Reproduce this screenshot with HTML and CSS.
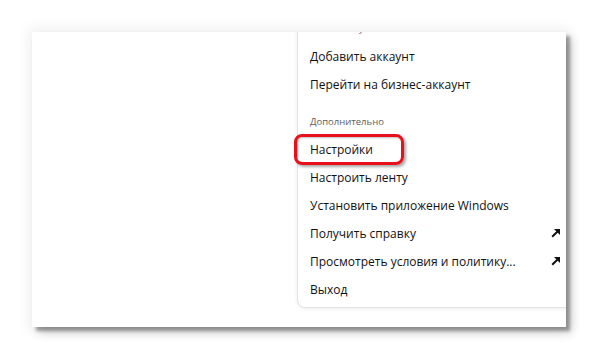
FILE: index.html
```html
<!DOCTYPE html>
<html lang="ru">
<head>
<meta charset="utf-8">
<link rel="stylesheet" href="styles.css">
</head>
<body>
<div class="page">
  <div class="frame">
    <div class="spacer"></div>
    <div class="panel">
      <div class="label first">Ваши аккаунты</div>
      <div class="item">Добавить аккаунт</div>
      <div class="item">Перейти на бизнес-аккаунт</div>
      <div class="label">Дополнительно</div>
      <div class="item marked">Настройки<span class="mark"></span></div>
      <div class="item">Настроить ленту</div>
      <div class="item">Установить приложение Windows</div>
      <div class="item"><span>Получить справку</span>
        <svg class="ext" width="10" height="10" viewBox="0 0 10 10"><path d="M1.2 8.8 L6.8 3.2" stroke="#111" stroke-width="2" fill="none"/><path d="M3 1 H9 V7 Z" fill="#111"/></svg>
      </div>
      <div class="item"><span>Просмотреть условия и политику...</span>
        <svg class="ext" width="10" height="10" viewBox="0 0 10 10"><path d="M1.2 8.8 L6.8 3.2" stroke="#111" stroke-width="2" fill="none"/><path d="M3 1 H9 V7 Z" fill="#111"/></svg>
      </div>
      <div class="item">Выход</div>
    </div>
  </div>
</div>
</body>
</html>
```

FILE: styles.css
```css
html, body {
  margin: 0;
  padding: 0;
  background: #ffffff;
  min-height: 359px;
}
.page {
  padding: 32px 0 0 32px;
  font-family: "Open Sans", "Noto Sans", sans-serif;
}
.frame {
  width: 534px;
  height: 295px;
  background: #ffffff;
  display: flex;
  overflow: hidden;
  box-shadow: 4px 4px 3px rgba(0, 0, 0, 0.32), 6px 6px 9px rgba(0, 0, 0, 0.16), 0 0 12px 4px rgba(0, 0, 0, 0.06);
}
.spacer {
  flex: 0 0 265px;
}
.panel {
  flex: 0 0 277px;
  box-sizing: border-box;
  margin-top: -18px;
  height: 294px;
  padding: 7px 0 5px 0;
  background: #ffffff;
  border: 1px solid #e3e3e3;
  border-radius: 8px;
  box-shadow: 0 1px 4px rgba(0, 0, 0, 0.07);
}
.label {
  font-size: 9.5px;
  line-height: 14px;
  color: #5e5e5e;
  padding: 17px 12px 6px 12px;
}
.label.first {
  padding-top: 0;
}
.item {
  position: relative;
  height: 28px;
  display: flex;
  align-items: center;
  justify-content: space-between;
  padding: 0 12px;
  font-size: 12px;
  color: #111111;
}
.ext {
  flex: 0 0 auto;
}
.mark {
  position: absolute;
  left: -4px;
  top: -1px;
  width: 110px;
  height: 31px;
  box-sizing: border-box;
  border: 3px solid #e8111b;
  border-radius: 8px;
  box-shadow: 2px 2px 3px rgba(0, 0, 0, 0.35), inset 1px 1px 2px rgba(0, 0, 0, 0.25);
}
```
